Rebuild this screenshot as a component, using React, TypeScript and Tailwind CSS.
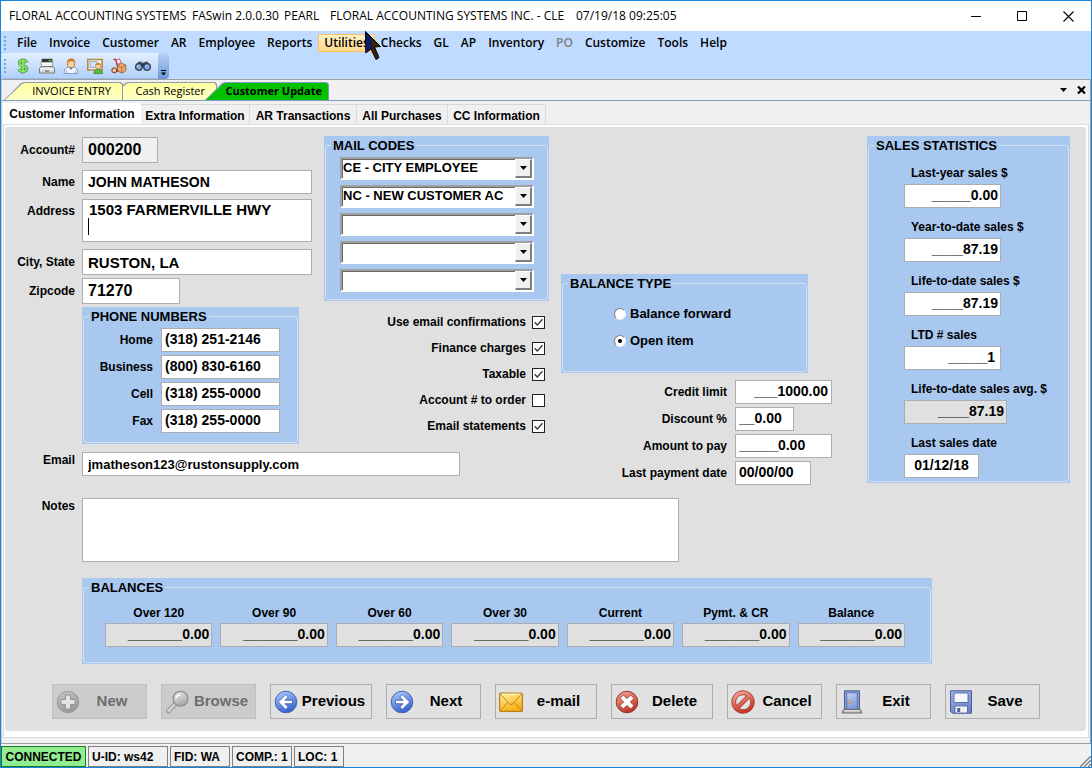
import React, { useId } from "react";
import type { ReactNode } from "react";

const FIELD = "block border border-[#abadb3] bg-white px-[3px] font-bold text-black outline-none";

/* ---------- drawings ---------- */

function DollarIcon() {
  return (
    <svg viewBox="0 0 16 16" className="h-4 w-4" aria-hidden="true">
      <path d="M12 4.6C11.3 3 9.6 2.6 8 2.6c-2 0-3.7.9-3.7 2.7 0 3.6 7.5 1.8 7.5 5.3 0 1.8-1.8 2.7-3.8 2.7-2.1 0-3.6-.8-4.2-2.4M8 .6v14.8" fill="none" stroke="#3c9a2c" strokeWidth="3" />
      <path d="M12 4.6C11.3 3 9.6 2.6 8 2.6c-2 0-3.7.9-3.7 2.7 0 3.6 7.5 1.8 7.5 5.3 0 1.8-1.8 2.7-3.8 2.7-2.1 0-3.6-.8-4.2-2.4M8 1.2v13.6" fill="none" stroke="#8be36a" strokeWidth="1.7" />
    </svg>
  );
}

function RegisterIcon() {
  return (
    <svg viewBox="0 0 16 16" className="h-4 w-4" aria-hidden="true">
      <path d="M3 1h10l1 4-.6 3.500H2.600L2 5z" fill="#e8e8e8" stroke="#8a8a8a" strokeWidth=".8" />
      <path d="M3 1h10.200v3.200H3z" fill="#333" />
      <path d="M9.500 2h3v1.200h-3z" fill="#5fd35f" />
      <path d="M3.500 5.500h9M3.200 7.200h9.600" stroke="#fff" strokeWidth="1" />
      <path d="M2 8.500h12l1.500 2v4.500H.5v-4.500z" fill="#d6d6d6" stroke="#666" strokeWidth=".8" />
      <path d="M1 11h14" stroke="#fff" strokeWidth="1" />
      <path d="M6 13h4" stroke="#555" strokeWidth="1" />
    </svg>
  );
}

function PersonIcon() {
  return (
    <svg viewBox="0 0 16 16" className="h-4 w-4" aria-hidden="true">
      <path d="M1 15.500c0-3.800 1.500-5.900 4.500-6.500h5c3 .6 4.500 2.700 4.500 6.500z" fill="#f2f6fc" stroke="#7f9ccb" />
      <path d="M6 9 8 12.300 10 9z" fill="#4f86cf" />
      <path d="M3.500 15.200v-2.500M12.500 15.200v-2.500" stroke="#7f9ccb" strokeWidth=".9" />
      <ellipse cx="8" cy="5.500" rx="3.600" ry="4.200" fill="#f8cf9f" stroke="#b0702e" strokeWidth=".9" />
      <path d="M4.200 5.600C3.800 1.800 5.700.4 8.200.4c2.600 0 4.200 1.600 3.700 5.100-.9-2-2.200-2.300-3.700-2.300-1.700 0-3 .4-4 2.400z" fill="#c97b28" />
    </svg>
  );
}

function PictureIcon() {
  return (
    <svg viewBox="0 0 16 16" className="h-4 w-4" aria-hidden="true">
      <path d="M.8 1.500h14.400v10.500H.8z" fill="#eef4fb" stroke="#b8893c" strokeWidth="1.600" />
      <path d="M3 3.500h7v6H3z" fill="#cfe2f7" stroke="#7a9cc6" strokeWidth=".8" />
      <path d="M7 15.500c0-2.800 1.200-4.200 4-4.500 3 .3 4.500 1.700 4.500 4.500z" fill="#59b947" stroke="#2d7a20" strokeWidth=".7" />
      <circle cx="11.200" cy="8.200" r="2.700" fill="#f8d2a8" stroke="#b97a3a" strokeWidth=".7" />
      <path d="M8.300 8c0-2.400 1.300-3.300 3-3.300S14.200 5.800 14 8c-1-1.300-4.500-1.300-5.700 0z" fill="#d58b36" />
    </svg>
  );
}

function DeliveryIcon() {
  return (
    <svg viewBox="0 0 16 16" className="h-4 w-4" aria-hidden="true">
      <path d="M2.500 1.500h2.300l2.200 9" fill="none" stroke="#b5231b" strokeWidth="1.300" />
      <path d="m5.300 2.600 3.200-1.900 1.300 3.900-3.200 1.800z" fill="#fff" stroke="#c33" strokeWidth=".8" />
      <path d="M6.500 7.500 10.500 5.200l4.300 1.900v5.800L11 15.200 6.800 13z" fill="#e9ad68" stroke="#8f5a28" strokeWidth=".8" />
      <path d="M6.500 7.500l4.200 2 4.100-2.400M10.700 9.500v5.500" fill="none" stroke="#8f5a28" strokeWidth=".7" />
      <path d="M7 13.300 3.500 12" stroke="#b5231b" strokeWidth="1.300" />
      <circle cx="3.300" cy="12.300" r="2.500" fill="#eec09a" stroke="#7a2f1a" strokeWidth="1" />
    </svg>
  );
}

function BinocularsIcon() {
  return (
    <svg viewBox="0 0 16 16" className="h-4 w-4" aria-hidden="true">
      <path d="M1.500 7c.4-2.400 2-3.700 4-3.500l1.500 1h2l1.500-1c2-.2 3.600 1.100 4 3.500z" fill="#4c4f58" />
      <path d="M6.500 6h3v3.500h-3z" fill="#33363e" />
      <circle cx="3.900" cy="9" r="3.300" fill="#7fa8ea" stroke="#353b4c" strokeWidth="1.300" />
      <circle cx="12.100" cy="9" r="3.300" fill="#7fa8ea" stroke="#353b4c" strokeWidth="1.300" />
      <path d="M2.300 8.800c.3-1 .9-1.400 1.800-1.500M10.500 8.800c.3-1 .9-1.400 1.800-1.500" fill="none" stroke="#dfeaff" strokeWidth="1" />
    </svg>
  );
}

function Gradient({ id, from, to }: { id: string; from: string; to: string }) {
  return (
    <defs>
      <linearGradient id={id} x1="0" y1="0" x2="0.4" y2="1">
        <stop offset="0" stopColor={from} />
        <stop offset="1" stopColor={to} />
      </linearGradient>
    </defs>
  );
}

function PlusIcon() {
  return (
    <svg viewBox="0 0 24 24" className="h-6 w-6" aria-hidden="true">
      <Gradient id="g-new" from="#c8c8c8" to="#9a9a9a" />
      <circle cx="12" cy="12" r="10.700" fill="url(#g-new)" stroke="#989898" />
      <path d="M9.500 5h5v4.500H19v5h-4.500V19h-5v-4.500H5v-5h4.500z" fill="#e2e2e2" stroke="#949494" />
    </svg>
  );
}

function BrowseIcon() {
  return (
    <svg viewBox="0 0 24 24" className="h-6 w-6" aria-hidden="true">
      <Gradient id="g-find" from="#efefef" to="#a8a8a8" />
      <path d="M10.500 13.500 3.500 21" stroke="#8a8a8a" strokeWidth="4.600" strokeLinecap="round" />
      <path d="M10.500 13.500 3.500 21" stroke="#d4d4d4" strokeWidth="2.800" strokeLinecap="round" />
      <circle cx="15.500" cy="8.700" r="7.400" fill="url(#g-find)" stroke="#8f8f8f" strokeWidth="1.300" />
      <path d="M11 8c.6-2 2-3.200 4.500-3.300" fill="none" stroke="#fff" strokeWidth="1.500" />
    </svg>
  );
}

function ArrowIcon({ right = false }: { right?: boolean }) {
  const id = right ? "g-next" : "g-prev";
  return (
    <svg viewBox="0 0 24 24" className="h-6 w-6" aria-hidden="true">
      <Gradient id={id} from="#b4d0fc" to="#3a66d6" />
      <circle cx="12" cy="12" r="10.800" fill={`url(#${id})`} stroke="#4a66a6" />
      <path
        d={right ? "M5.500 10.300h7.600L9.800 7l2.500-2.400 7.400 7.400-7.400 7.400L9.800 17l3.300-3.300H5.500z" : "M18.500 10.300h-7.600L14.200 7l-2.500-2.400L4.300 12l7.400 7.400 2.500-2.400-3.300-3.300h7.600z"}
        fill="#fff"
        stroke="#3a5cae"
        strokeWidth=".8"
      />
    </svg>
  );
}

function MailIcon() {
  return (
    <svg viewBox="0 0 24 24" className="h-6 w-6" aria-hidden="true">
      <Gradient id="g-mail" from="#fff3a0" to="#fbb116" />
      <rect x=".6" y="3.100" width="22.800" height="18.300" rx="1" fill="url(#g-mail)" stroke="#b8801a" strokeWidth="1.200" />
      <path d="M1.500 4 10 13.500c1.300 1.200 2.700 1.200 4 0L22.500 4M1.500 20.500l7.300-8M22.500 20.500l-7.300-8" fill="none" stroke="#bd8520" />
      <path d="M2.500 4.200h19" stroke="#fffbe0" />
    </svg>
  );
}

function DeleteIcon() {
  return (
    <svg viewBox="0 0 24 24" className="h-6 w-6" aria-hidden="true">
      <Gradient id="g-del" from="#f9a79c" to="#c23824" />
      <circle cx="12" cy="12" r="10.800" fill="url(#g-del)" stroke="#8e3a30" />
      <path d="M8.400 5 12 8.600 15.600 5 19 8.400 15.400 12l3.600 3.600-3.400 3.400-3.600-3.600L8.400 19 5 15.600 8.600 12 5 8.400z" fill="#fff" stroke="#94392d" strokeWidth=".9" strokeLinejoin="round" />
    </svg>
  );
}

function CancelIcon() {
  return (
    <svg viewBox="0 0 24 24" className="h-6 w-6" aria-hidden="true">
      <Gradient id="g-can" from="#fbb3a8" to="#c93420" />
      <path
        fillRule="evenodd"
        d="M12 .7a11.300 11.300 0 1 0 0 22.600A11.300 11.300 0 0 0 12 .7zm0 4c1.400 0 2.600.3 3.700.9L5.600 15.700A7.300 7.300 0 0 1 12 4.700zm6.400 3.600A7.300 7.300 0 0 1 8.300 18.400z"
        fill="url(#g-can)"
        stroke="#a03a2c"
        strokeWidth=".9"
      />
    </svg>
  );
}

function DoorIcon() {
  return (
    <svg viewBox="0 0 24 24" className="h-6 w-6" aria-hidden="true">
      <Gradient id="g-door" from="#c7d6fb" to="#8299dc" />
      <path d="M4.500.8h15v19h-15z" fill="#8c9fd6" stroke="#4a5a92" />
      <path d="M6.800 2.800h10.500v16.500H6.800z" fill="url(#g-door)" stroke="#5668a2" strokeWidth=".8" />
      <circle cx="9.200" cy="12" r="1.400" fill="#f0d9a0" stroke="#8a6a2a" strokeWidth=".6" />
      <path d="M3.500 19.500h17l1.500 3.500H2z" fill="#b9b9b9" stroke="#6d6d6d" />
      <path d="M4.500 20.800h15" stroke="#eee" />
    </svg>
  );
}

function SaveIcon() {
  return (
    <svg viewBox="0 0 24 24" className="h-6 w-6" aria-hidden="true">
      <Gradient id="g-save" from="#a4b6ee" to="#6e84cc" />
      <path d="M1.500.8h21v22.400h-19l-2-2z" fill="url(#g-save)" stroke="#4a5b98" />
      <path d="M5 3h14v9.500H5z" fill="#f4f7ff" stroke="#55669f" strokeWidth=".9" />
      <path d="M6 16h12.500v7H6z" fill="#f2f2f2" stroke="#55669f" strokeWidth=".9" />
      <path d="M8.200 18h3v4h-3z" fill="#4d5f9e" />
    </svg>
  );
}

/* ---------- shared parts ---------- */

function GroupBox({ title, className, children }: { title: string; className: string; children: ReactNode }) {
  return (
    <div className={`flex bg-[#a8c8f0] p-px ${className}`}>
      <fieldset className="min-w-0 flex-1 rounded-[3px] border border-[#d3e0f0]">
        <legend className="ml-[5px] px-[2px] text-[13px] leading-[17px]">{title}</legend>
        {children}
      </fieldset>
    </div>
  );
}

function Row({
  label,
  value,
  labelClass,
  fieldClass,
  className = "",
}: {
  label: string;
  value: string;
  labelClass: string;
  fieldClass: string;
  className?: string;
}) {
  const id = useId();
  return (
    <div className={`flex items-center ${className}`}>
      <label htmlFor={id} className={`shrink-0 text-right leading-4 ${labelClass}`}>
        {label}
      </label>
      <input id={id} defaultValue={value} className={`${FIELD} ${fieldClass}`} />
    </div>
  );
}

function MailCode({ value, index }: { value: string; index: number }) {
  return (
    <div className="relative h-[23px] border-2 border-t-[#a0a0a0] border-r-white border-b-white border-l-[#a0a0a0] bg-white">
      <select
        aria-label={`Mail code ${index}`}
        defaultValue={value}
        className="block h-full w-full appearance-none border-t border-l border-[#696969] bg-white pr-5 pb-[2px] text-[13px] leading-4 font-bold outline-none"
      >
        <option value={value}>{value}</option>
      </select>
      <span className="pointer-events-none absolute top-0 right-0 flex h-[19px] w-[17px] items-center justify-center border-t border-r-2 border-b-2 border-l border-t-white border-r-[#808080] border-b-[#808080] border-l-white bg-[#f0f0f0]">
        <svg viewBox="0 0 7 4" className="h-1 w-[7px]" aria-hidden="true">
          <path d="M0 0h7L3.500 4z" fill="#000" />
        </svg>
      </span>
    </div>
  );
}

function Check({ label, checked }: { label: string; checked: boolean }) {
  return (
    <label className="flex h-5 items-center justify-end gap-[6px]">
      <span>{label}</span>
      <span className="relative flex h-[13px] w-[13px]">
        <input type="checkbox" defaultChecked={checked} className="peer h-[13px] w-[13px] appearance-none border border-[#222] bg-white" />
        <svg viewBox="0 0 13 13" className="pointer-events-none absolute inset-0 hidden peer-checked:block" aria-hidden="true">
          <path d="M2.700 6.200 5.300 9l5.200-5.800" fill="none" stroke="#333" strokeWidth="1.300" />
        </svg>
      </span>
    </label>
  );
}

function Radio({ label, checked }: { label: string; checked: boolean }) {
  return (
    <label className="flex h-5 items-center gap-[4px] text-[13px]">
      <span className="relative flex h-3 w-3">
        <input
          type="radio"
          name="balance-type"
          defaultChecked={checked}
          className="peer h-3 w-3 appearance-none rounded-full border border-t-[#808080] border-r-[#f0f0f0] border-b-[#f0f0f0] border-l-[#808080] bg-white"
        />
        <span className="pointer-events-none absolute top-1 left-1 hidden h-1 w-1 rounded-full bg-black peer-checked:block" />
      </span>
      <span>{label}</span>
    </label>
  );
}

function Stat({ label, value, fieldClass }: { label: string; value: string; fieldClass: string }) {
  const id = useId();
  return (
    <div className="flex flex-col gap-[3px]">
      <label htmlFor={id} className="pl-[7px] leading-4 whitespace-nowrap">
        {label}
      </label>
      <input id={id} defaultValue={value} className={`h-6 border border-[#abadb3] px-[2px] pb-[2px] text-sm font-bold outline-none ${fieldClass}`} />
    </div>
  );
}

function Balance({ label }: { label: string }) {
  const id = useId();
  return (
    <div className="flex min-w-0 flex-col gap-[2px]">
      <label htmlFor={id} className="text-center leading-4">
        {label}
      </label>
      <input
        id={id}
        readOnly
        value="_______0.00"
        className="h-6 w-full min-w-0 border border-[#abadb3] bg-[#e0e0e0] px-[2px] pb-[2px] text-right text-sm font-bold outline-none"
      />
    </div>
  );
}

function ActionButton({ icon, label, wide = false, disabled = false }: { icon: ReactNode; label: string; wide?: boolean; disabled?: boolean }) {
  return (
    <button
      type="button"
      disabled={disabled}
      className={`flex h-[35px] items-center border pl-[3px] text-[15px] font-bold ${wide ? "w-[102px]" : "w-[95px]"} ${
        disabled ? "border-[#bfbfbf] bg-[#cccccc] text-[#6d6d6d]" : "border-[#adadad] bg-[#e1e1e1] text-black"
      }`}
    >
      {icon}
      <span className="flex-1 pr-[2px] pb-[2px] text-center">{label}</span>
    </button>
  );
}

function DocTab({ label, className, face }: { label: string; className: string; face: string }) {
  return (
    <button
      type="button"
      className={`flex h-[18px] pt-px pr-px pl-px [clip-path:polygon(0_100%,17px_1px,20px_0,calc(100%-2px)_0,100%_2px,100%_100%)] ${className}`}
    >
      <span
        className={`flex flex-1 items-center justify-end pr-[11px] whitespace-nowrap [clip-path:polygon(0_100%,17px_1px,20px_0,calc(100%-2px)_0,100%_2px,100%_100%)] ${face}`}
      >
        {label}
      </span>
    </button>
  );
}

function Grip() {
  return (
    <span className="flex flex-col gap-[2px]" aria-hidden="true">
      <span className="h-[2px] w-[2px] bg-[#7f9fd0]" />
      <span className="h-[2px] w-[2px] bg-[#7f9fd0]" />
      <span className="h-[2px] w-[2px] bg-[#7f9fd0]" />
      <span className="h-[2px] w-[2px] bg-[#7f9fd0]" />
    </span>
  );
}

/* ---------- data ---------- */

const MENU = ["File", "Invoice", "Customer", "AR", "Employee", "Reports", "Utilities", "Checks", "GL", "AP", "Inventory", "PO", "Customize", "Tools", "Help"];

const TOOLS = [
  { name: "Sales", icon: <DollarIcon /> },
  { name: "Register", icon: <RegisterIcon /> },
  { name: "Customer", icon: <PersonIcon /> },
  { name: "Employee", icon: <PictureIcon /> },
  { name: "Delivery", icon: <DeliveryIcon /> },
  { name: "Find", icon: <BinocularsIcon /> },
];

const PAGES = [
  { label: "Extra Information", width: "w-[109px]" },
  { label: "AR Transactions", width: "w-[107px]" },
  { label: "All Purchases", width: "w-[91px]" },
  { label: "CC Information", width: "w-[98px]" },
];

const MAIL_CODES = ["CE - CITY EMPLOYEE", "NC - NEW CUSTOMER AC", "", "", ""];

const PHONES = [
  { label: "Home", value: "(318) 251-2146" },
  { label: "Business", value: "(800) 830-6160" },
  { label: "Cell", value: "(318) 255-0000" },
  { label: "Fax", value: "(318) 255-0000" },
];

const BALANCES = ["Over 120", "Over 90", "Over 60", "Over 30", "Current", "Pymt. & CR", "Balance"];

const STATUS = [
  { label: "U-ID: ws42", width: "w-20" },
  { label: "FID: WA", width: "w-[60px]" },
  { label: "COMP.: 1", width: "w-[60px]" },
  { label: "LOC: 1", width: "w-[50px]" },
];

/* ---------- window ---------- */

export default function App() {
  return (
    <div className="flex min-h-screen flex-col border border-[#1883d7] bg-[#f0f0f0] font-['Liberation_Sans',Arial,sans-serif] text-xs font-bold text-black">
      <header className="flex h-[30px] items-center bg-white pl-2 font-['Open_Sans','Noto_Sans',sans-serif] text-xs font-normal">
        <h1 className="flex whitespace-pre">
          <span className="w-[183px]">FLORAL ACCOUNTING SYSTEMS</span>
          <span className="w-[92px]">FASwin 2.0.0.30</span>
          <span className="w-[46px]">PEARL</span>
          <span className="w-[246px]">FLORAL ACCOUNTING SYSTEMS INC. - CLE</span>
          <span>07/19/18 09:25:05</span>
        </h1>
        <div className="ml-auto flex">
          <button type="button" aria-label="Minimize" className="flex h-7 w-[46px] items-center justify-center">
            <svg viewBox="0 0 11 11" className="h-[11px] w-[11px]" aria-hidden="true">
              <path d="M0 5.500h10" stroke="#000" />
            </svg>
          </button>
          <button type="button" aria-label="Maximize" className="flex h-7 w-[46px] items-center justify-center">
            <svg viewBox="0 0 11 11" className="h-[11px] w-[11px]" aria-hidden="true">
              <path d="M.5.5h9v9h-9z" fill="none" stroke="#000" />
            </svg>
          </button>
          <button type="button" aria-label="Close" className="flex h-7 w-[46px] items-center justify-center">
            <svg viewBox="0 0 11 11" className="h-[11px] w-[11px]" aria-hidden="true">
              <path d="m.5.500 10 10m0-10-10 10" stroke="#000" strokeWidth="1.100" />
            </svg>
          </button>
        </div>
      </header>

      <div className="relative flex h-[49px] flex-col border-b border-[#a0a0a0] bg-[#bfdbff]">
        <nav className="flex h-[22px] items-center pt-[2px] pl-[3px] font-['Open_Sans','Noto_Sans',sans-serif] text-xs">
          <Grip />
          <div className="ml-[5px] flex items-center">
            {MENU.map((item) => (
              <button
                key={item}
                type="button"
                disabled={item === "PO"}
                className={`h-[18px] border px-[5px] leading-4 font-semibold disabled:text-[#808080] ${
                  item === "Utilities" ? "border-[#ffbd69] bg-gradient-to-b from-[#fff0c4] to-[#ffd78a]" : "border-transparent"
                }`}
              >
                {item}
              </button>
            ))}
          </div>
        </nav>
        <div className="flex h-[26px] items-stretch">
          <div className="flex items-center rounded-tl-sm rounded-bl-sm border-b border-[#9cbce8] bg-gradient-to-b from-[#e3efff] to-[#b1d0fb] pr-[7px] pl-[3px]">
            <Grip />
            <div className="ml-[9px] flex gap-2">
              {TOOLS.map((tool) => (
                <button key={tool.name} type="button" aria-label={tool.name} className="h-4 w-4">
                  {tool.icon}
                </button>
              ))}
            </div>
          </div>
          <button type="button" aria-label="Toolbar options" className="flex w-[11px] items-end justify-center rounded-r-sm bg-gradient-to-b from-[#b8d4fb] to-[#6c96d6] pb-[3px]">
            <svg viewBox="0 0 7 6" className="h-[6px] w-[7px]" aria-hidden="true">
              <path d="M1 .5h5" stroke="#000" />
              <path d="M1 2.500h5L3.500 5.500z" fill="#000" />
            </svg>
          </button>
        </div>
        <svg viewBox="0 0 16 30" className="pointer-events-none absolute top-0 left-[364px] h-[30px] w-4" aria-hidden="true">
          <path d="M.5.500 15.500 15.500 9.500 16 14 26.500 11 28.500 6 18 .8 22z" fill="#3a2208" stroke="#000" />
          <path d="M1 1.500 6.500 7v10L1 21z" fill="#0a1c66" />
        </svg>
      </div>

      <div className="flex flex-1 flex-col border-x border-r-[#a0a0a0] border-l-[#c8ccd0]">
        <div className="flex h-[21px] items-end border-b border-[#7f9db9] font-['Open_Sans','Noto_Sans',sans-serif] text-[11px]">
          <DocTab label="INVOICE ENTRY" className="relative z-10 ml-[2px] w-[119px] bg-[#8c9bab]" face="bg-gradient-to-b from-[#ffffa0] to-[#ffffc8] font-normal" />
          <DocTab label="Cash Register" className="-ml-[15px] w-[109px] bg-[#8c9bab]" face="bg-gradient-to-b from-[#ffffa0] to-[#ffffc8] font-normal" />
          <DocTab label="Customer Update" className="relative z-10 -ml-[12px] w-[124px] bg-[#7f9db9]" face="bg-[#00c000] font-bold pr-[6px]!" />
          <div className="mr-1 ml-auto flex h-full items-center gap-2">
            <button type="button" aria-label="Tab list" className="flex h-4 w-[9px] items-center justify-center">
              <svg viewBox="0 0 7 4" className="h-1 w-[7px]" aria-hidden="true">
                <path d="M0 0h7L3.500 4z" fill="#000" />
              </svg>
            </button>
            <button type="button" aria-label="Close tab" className="flex h-4 w-[10px] items-center justify-center">
              <svg viewBox="0 0 9 8" className="h-2 w-[9px]" aria-hidden="true">
                <path d="m1 .500 7 7m0-7-7 7" stroke="#000" strokeWidth="2.200" />
              </svg>
            </button>
          </div>
        </div>

        <div className="flex h-[23px] items-end pl-px">
          <button type="button" className="h-[21px] w-[138px] bg-white text-center">
            Customer Information
          </button>
          {PAGES.map((page) => (
            <button key={page.label} type="button" className={`h-[20px] border-t border-r border-[#d9d9d9] pt-[3px] text-center whitespace-nowrap ${page.width}`}>
              {page.label}
            </button>
          ))}
        </div>

        <main className="mx-px flex-1 border border-[#dcdcdc] bg-white pt-[2px] pr-[2px] pb-[5px] pl-px">
          <form className="h-full rounded-[3px] bg-[#e0e0e0] pt-[9px] pb-3" onSubmit={(event) => event.preventDefault()}>
            <div className="flex items-start pr-4">
              {/* address, phones, mail codes and flags */}
              <div className="flex flex-col">
                <div className="flex gap-3">
                  <div className="flex w-[307px] flex-col pt-px">
                    <Row label="Account#" value="000200" labelClass="w-[70px] mr-[7px]" fieldClass="h-[26px] w-[76px] bg-[#f0f0f0]! px-[5px]! text-base" />
                    <Row className="mt-[7px]" label="Name" value="JOHN MATHESON" labelClass="w-[70px] mr-[7px]" fieldClass="h-6 min-w-0 flex-1 px-[5px]! text-sm" />
                    <div className="mt-[5px] flex items-start">
                      <label htmlFor="address" className="mr-[7px] w-[70px] shrink-0 pt-1 text-right leading-4">
                        Address
                      </label>
                      <div className="relative flex min-w-0 flex-1">
                        <textarea id="address" defaultValue={"1503 FARMERVILLE HWY\n"} className={`${FIELD} h-[43px] w-full resize-none overflow-hidden px-[6px]! pt-px text-[15px] leading-[17px]`} />
                        <span className="absolute top-[19px] left-[6px] h-[17px] w-px bg-black" />
                      </div>
                    </div>
                    <Row className="mt-[7px]" label="City, State" value="RUSTON, LA" labelClass="w-[70px] mr-[7px]" fieldClass="h-[26px] min-w-0 flex-1 px-[5px]! text-[15px]" />
                    <Row className="mt-[3px]" label="Zipcode" value="71270" labelClass="w-[70px] mr-[7px]" fieldClass="h-[26px] w-[98px] px-[5px]! text-base" />
                    <GroupBox title="PHONE NUMBERS" className="mt-[3px] ml-[77px] w-[217px]">
                      <div className="flex flex-col gap-[3px] pt-[3px] pb-[9px]">
                        {PHONES.map((phone) => (
                          <Row key={phone.label} label={phone.label} value={phone.value} labelClass="w-[69px] mr-[8px]" fieldClass="h-6 w-[119px] pb-[2px] text-sm" />
                        ))}
                      </div>
                    </GroupBox>
                  </div>

                  <div className="flex w-[225px] flex-col">
                    <GroupBox title="MAIL CODES" className="">
                      <div className="flex flex-col gap-[5px] pt-[3px] pr-[13px] pb-[7px] pl-[14px]">
                        {MAIL_CODES.map((code, index) => (
                          <MailCode key={index} value={code} index={index + 1} />
                        ))}
                      </div>
                    </GroupBox>
                    <div className="mt-[11px] mr-1 flex flex-col gap-[6px]">
                      <Check label="Use email confirmations" checked />
                      <Check label="Finance charges" checked />
                      <Check label="Taxable" checked />
                      <Check label="Account # to order" checked={false} />
                      <Check label="Email statements" checked />
                    </div>
                  </div>
                </div>
                <div className="mt-2 flex items-start">
                  <label htmlFor="email" className="mr-[7px] w-[70px] shrink-0 text-right leading-4">
                    Email
                  </label>
                  <input id="email" defaultValue="jmatheson123@rustonsupply.com" className={`${FIELD} h-6 w-[378px] px-[5px]! text-[13px]`} />
                </div>
              </div>

              {/* balance type and credit terms */}
              <div className="mt-[138px] ml-3 flex w-[271px] flex-col">
                <GroupBox title="BALANCE TYPE" className="w-[247px]">
                  <div className="flex flex-col items-start gap-[7px] pt-3 pb-5 pl-[51px]">
                    <Radio label="Balance forward" checked={false} />
                    <Radio label="Open item" checked />
                  </div>
                </GroupBox>
                <div className="mt-[7px] flex flex-col gap-[3px]">
                  <Row label="Credit limit" value="___1000.00" labelClass="w-[166px] mr-[8px]" fieldClass="h-6 w-[97px] pb-[2px] text-right text-sm" />
                  <Row label="Discount %" value="__0.00" labelClass="w-[166px] mr-[8px]" fieldClass="h-6 w-[59px] pb-[2px] text-sm" />
                  <Row label="Amount to pay" value="_____0.00" labelClass="w-[166px] mr-[8px]" fieldClass="h-6 w-[97px] pb-[2px] text-sm" />
                  <Row label="Last payment date" value="00/00/00" labelClass="w-[166px] mr-[8px]" fieldClass="h-6 w-[76px] pb-[2px] text-sm" />
                </div>
              </div>

              {/* sales statistics */}
              <GroupBox title="SALES STATISTICS" className="ml-auto w-[203px]">
                <div className="flex flex-col gap-[11px] pt-[11px] pb-[3px] pl-[35px]">
                  <Stat label="Last-year sales $" value="_____0.00" fieldClass="w-[97px] bg-white text-right" />
                  <Stat label="Year-to-date sales $" value="____87.19" fieldClass="w-[97px] bg-white text-right" />
                  <Stat label="Life-to-date sales $" value="____87.19" fieldClass="w-[97px] bg-white text-right" />
                  <Stat label="LTD # sales" value="_____1" fieldClass="w-[97px] bg-white pr-[5px]! text-right" />
                  <Stat label="Life-to-date sales avg. $" value="____87.19" fieldClass="w-[103px] bg-[#e0e0e0] text-right" />
                  <Stat label="Last sales date" value="01/12/18" fieldClass="w-[75px] bg-white text-center" />
                </div>
              </GroupBox>
            </div>

            <div className="mt-[13px] flex items-start">
              <label htmlFor="notes" className="mr-[7px] w-[70px] shrink-0 text-right leading-4">
                Notes
              </label>
              <textarea id="notes" className={`${FIELD} h-16 w-[597px] resize-none text-sm`} />
            </div>

            <GroupBox title="BALANCES" className="mt-4 ml-[77px] w-[850px]">
              <div className="grid grid-cols-7 gap-2 pt-[9px] pr-[25px] pb-[15px] pl-[21px]">
                {BALANCES.map((label) => (
                  <Balance key={label} label={label} />
                ))}
              </div>
            </GroupBox>

            <div className="mt-5 flex gap-[14px] pl-[47px]">
              <ActionButton icon={<PlusIcon />} label="New" disabled />
              <ActionButton icon={<BrowseIcon />} label="Browse" disabled />
              <ActionButton icon={<ArrowIcon />} label="Previous" wide />
              <ActionButton icon={<ArrowIcon right />} label="Next" />
              <ActionButton icon={<MailIcon />} label="e-mail" wide />
              <ActionButton icon={<DeleteIcon />} label="Delete" wide />
              <ActionButton icon={<CancelIcon />} label="Cancel" />
              <ActionButton icon={<DoorIcon />} label="Exit" />
              <ActionButton icon={<SaveIcon />} label="Save" />
            </div>
          </form>
        </main>
        <div className="h-[5px]" />
      </div>

      <footer className="flex h-6 items-end border-t border-[#a0a0a0]">
        <div className="flex h-[21px] flex-1 gap-[2px]">
          <span className="flex w-[85px] items-center justify-center border border-[#1f7a1f] bg-[#90ee90]">CONNECTED</span>
          {STATUS.map((cell) => (
            <span key={cell.label} className={`flex items-center border border-[#808080] pl-[3px] whitespace-nowrap ${cell.width}`}>
              {cell.label}
            </span>
          ))}
        </div>
        <svg viewBox="0 0 11 11" className="h-[11px] w-[11px]" aria-hidden="true">
          <path d="M0 11 11 0M4 11l7-7M8 11l3-3" stroke="#808080" strokeWidth="1.400" />
        </svg>
      </footer>
    </div>
  );
}
